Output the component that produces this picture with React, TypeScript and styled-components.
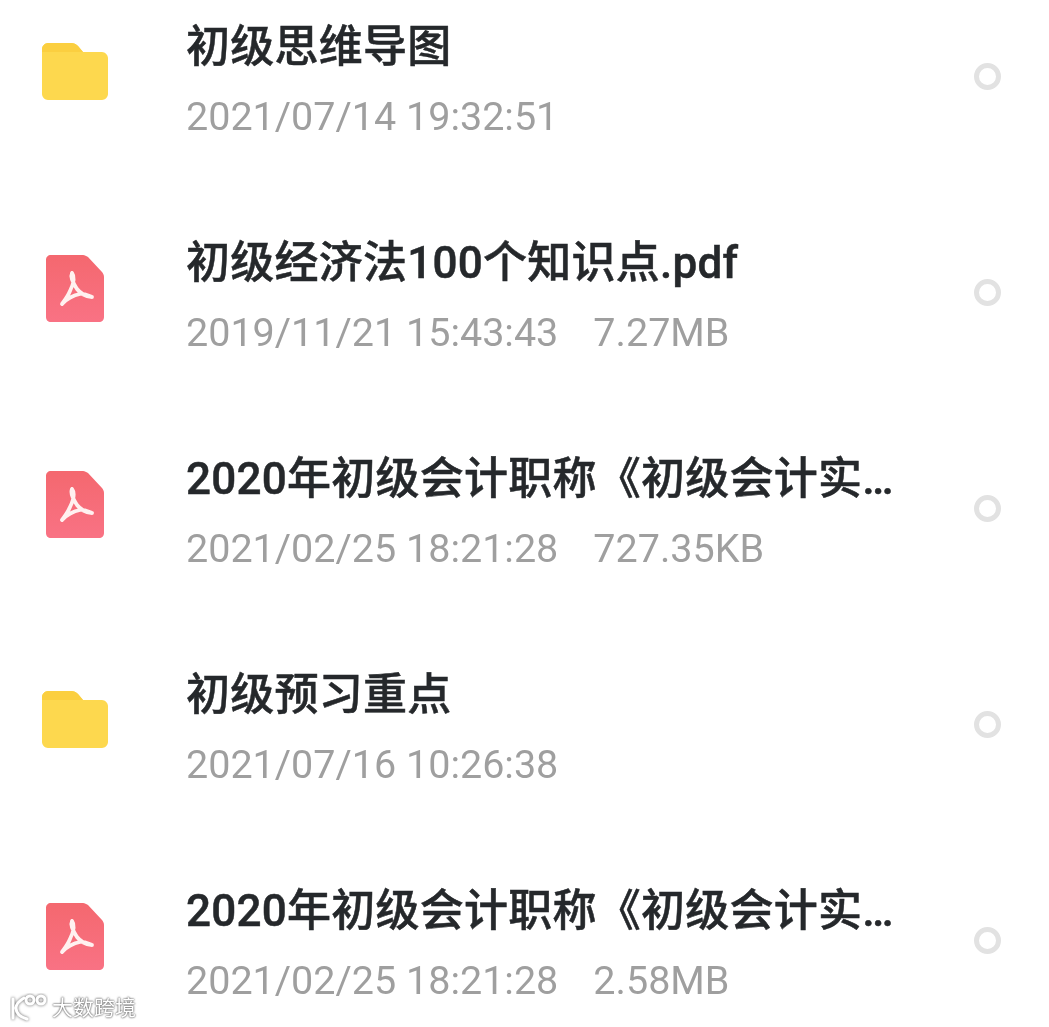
import React from 'react';
import styled, { createGlobalStyle } from 'styled-components';

const GlobalStyle = createGlobalStyle`
  html, body {
    margin: 0;
    padding: 0;
    background: #fff;
  }
`;

const Page = styled.div`
  position: relative;
  width: 1049px;
  height: 1027px;
  overflow: hidden;
  background: #fff;
  font-family: Roboto, "Noto Sans CJK SC", sans-serif;
  filter: blur(0.7px);
`;

const Row = styled.div`
  display: grid;
  grid-template-columns: 186px 1fr 62px;
  height: 216px;
  box-sizing: border-box;
  padding-right: 48px;
`;

const IconCell = styled.div<{ $top: number }>`
  display: flex;
  justify-content: center;
  width: 150px;
  padding-top: ${(p) => p.$top}px;
`;

const Texts = styled.div`
  display: flex;
  flex-direction: column;
  min-width: 0;
`;

const Title = styled.div`
  height: 94px;
  line-height: 94px;
  font-size: 44px;
  font-weight: 500;
  -webkit-text-stroke: 0.5px #25282b;
  letter-spacing: 0.25px;
  color: #25282b;
  white-space: nowrap;
`;

const Meta = styled.div`
  display: flex;
  gap: 35px;
  height: 46px;
  line-height: 46px;
  font-size: 39.5px;
  font-weight: 400;
  color: #9f9f9f;
  white-space: nowrap;
`;

const RadioCell = styled.div`
  display: flex;
  justify-content: flex-end;
  padding-top: 63px;
`;

const Radio = styled.div`
  width: 27px;
  height: 27px;
  box-sizing: border-box;
  border: 5px solid #e2e2e2;
  border-radius: 50%;
`;

const Watermark = styled.div`
  position: absolute;
  left: 10px;
  bottom: 4px;
  display: flex;
  align-items: center;
  gap: 4px;
  color: #fff;
  font-size: 21px;
  line-height: 30px;
  text-shadow: 0 0 2px #606060, 0 0 2px #606060;
`;

const FolderIcon = () => (
  <svg width="68" height="60" viewBox="0 0 68 60">
    <path
      d="M7 1h23c3 0 5 1 7 3l5 6h19c3 0 6 3 6 6v36c0 3-3 6-6 6H7c-3 0-6-3-6-6V7c0-3 3-6 6-6z"
      fill="#fdd84e"
    />
    <path d="M1 10V7c0-3 3-6 6-6h23c3 0 5 1 7 3l5 6z" fill="#fbcf40" />
  </svg>
);

const PdfIcon = () => (
  <svg width="58" height="67" viewBox="0 0 58 67">
    <defs>
      <linearGradient id="pdfFill" x1="0" y1="0" x2="0" y2="1">
        <stop offset="0" stopColor="#f4686f" />
        <stop offset="1" stopColor="#f97284" />
      </linearGradient>
    </defs>
    <path
      d="M5 0h32c2 0 3 1 5 2l14 15c1 1 2 3 2 5v40c0 3-2 5-5 5H5c-3 0-5-2-5-5V5c0-3 2-5 5-5z"
      fill="url(#pdfFill)"
    />
    <path
      d="M26 18c-2 4 1 10 5 16 3 4 9 8 15 8 M26 18c3 4 1 12-2 18-2 5-5 9-8 13 M16 49c4-5 12-9 18-10 4-1 9 2 12 3"
      fill="none"
      stroke="#fff1f0"
      strokeWidth="3.8"
      strokeLinecap="round"
    />
  </svg>
);

const LogoMark = () => (
  <svg width="38" height="30" viewBox="0 0 38 30">
    <g fill="none" stroke="#fff" strokeWidth="3" strokeLinecap="round" style={{ filter: 'drop-shadow(0 0 1.5px #606060)' }}>
      <path d="M3 6v19 M14 5c-5 3-8 6-8 10 0 5 4 9 11 11" />
      <circle cx="20" cy="7" r="4" />
      <circle cx="31" cy="7" r="4" />
    </g>
  </svg>
);

type FileItem = {
  kind: 'folder' | 'pdf';
  name: string;
  date: string;
  size?: string;
};

const files: FileItem[] = [
  { kind: 'folder', name: '初级思维导图', date: '2021/07/14 19:32:51' },
  { kind: 'pdf', name: '初级经济法100个知识点.pdf', date: '2019/11/21 15:43:43', size: '7.27MB' },
  { kind: 'pdf', name: '2020年初级会计职称《初级会计实…', date: '2021/02/25 18:21:28', size: '727.35KB' },
  { kind: 'folder', name: '初级预习重点', date: '2021/07/16 10:26:38' },
  { kind: 'pdf', name: '2020年初级会计职称《初级会计实…', date: '2021/02/25 18:21:28', size: '2.58MB' },
];

export default function App() {
  return (
    <Page>
      <GlobalStyle />
      {files.map((file, i) => (
        <Row key={i}>
          <IconCell $top={file.kind === 'folder' ? 42 : 39}>
            {file.kind === 'folder' ? <FolderIcon /> : <PdfIcon />}
          </IconCell>
          <Texts>
            <Title>{file.name}</Title>
            <Meta>
              <span>{file.date}</span>
              {file.size && <span>{file.size}</span>}
            </Meta>
          </Texts>
          <RadioCell>
            <Radio />
          </RadioCell>
        </Row>
      ))}
      <Watermark>
        <LogoMark />
        <span>大数跨境</span>
      </Watermark>
    </Page>
  );
}
